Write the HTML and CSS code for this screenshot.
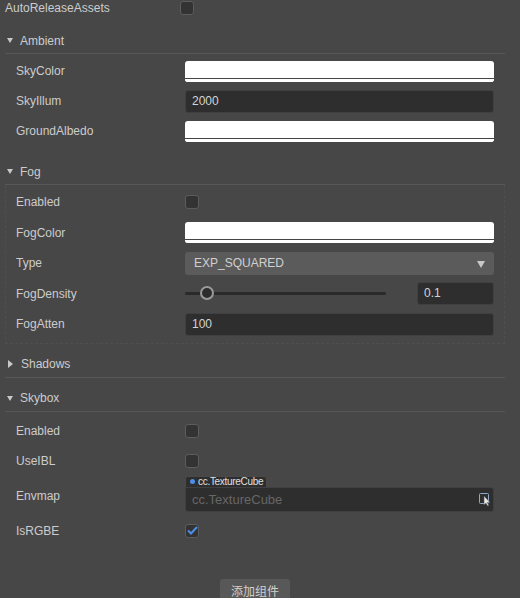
FILE: index.html
```html
<!DOCTYPE html>
<html lang="en">
  <head>
    <meta charset="UTF-8">
    <title>Scene Inspector</title>
    <link rel="stylesheet" href="styles.css">
  </head>
  <body>
    <div class="panel">
      <div class="prop top">
        <label>AutoReleaseAssets</label>
        <div class="value"><span class="checkbox"></span></div>
      </div>

      <div class="section">
        <div class="section-header"><span class="arrow down"></span>Ambient</div>
        <div class="section-body">
          <div class="prop">
            <label>SkyColor</label>
            <div class="value"><div class="color-box"><div class="color"></div><div class="alpha"></div></div></div>
          </div>
          <div class="prop">
            <label>SkyIllum</label>
            <div class="value"><div class="input">2000</div></div>
          </div>
          <div class="prop">
            <label>GroundAlbedo</label>
            <div class="value"><div class="color-box"><div class="color"></div><div class="alpha"></div></div></div>
          </div>
        </div>
      </div>

      <div class="section">
        <div class="section-header"><span class="arrow down"></span>Fog</div>
        <div class="section-body dashed">
          <div class="prop">
            <label>Enabled</label>
            <div class="value"><span class="checkbox"></span></div>
          </div>
          <div class="prop">
            <label>FogColor</label>
            <div class="value"><div class="color-box"><div class="color"></div><div class="alpha"></div></div></div>
          </div>
          <div class="prop">
            <label>Type</label>
            <div class="value">
              <div class="select">EXP_SQUARED<span class="select-arrow"></span></div>
            </div>
          </div>
          <div class="prop">
            <label>FogDensity</label>
            <div class="value slider-row">
              <div class="slider"><span class="thumb"></span></div>
              <div class="input number">0.1</div>
            </div>
          </div>
          <div class="prop">
            <label>FogAtten</label>
            <div class="value"><div class="input">100</div></div>
          </div>
        </div>
      </div>

      <div class="section">
        <div class="section-header"><span class="arrow right"></span>Shadows</div>
      </div>

      <div class="section">
        <div class="section-header"><span class="arrow down"></span>Skybox</div>
        <div class="section-body skybox">
          <div class="prop">
            <label>Enabled</label>
            <div class="value"><span class="checkbox"></span></div>
          </div>
          <div class="prop">
            <label>UseIBL</label>
            <div class="value"><span class="checkbox"></span></div>
          </div>
          <div class="prop tall">
            <label>Envmap</label>
            <div class="value">
              <div class="asset">
                <div class="asset-tag"><span class="dot"></span>cc.TextureCube</div>
                <div class="asset-field">
                  <span class="placeholder">cc.TextureCube</span>
                  <svg class="pick" width="12" height="13" viewBox="0 0 12 13">
                    <rect x="0.5" y="0.5" width="9" height="10" rx="1" fill="none" stroke="#8fa9c8" stroke-width="1"/>
                    <path d="M5 3 L5 12 L7 10 L8.5 13 L9.8 12.4 L8.4 9.6 L11 9.4 Z" fill="#e8e8e8" stroke="#555" stroke-width="0.6"/>
                  </svg>
                </div>
              </div>
            </div>
          </div>
          <div class="prop">
            <label>IsRGBE</label>
            <div class="value">
              <span class="checkbox checked">
                <svg width="11" height="9" viewBox="0 0 11 9"><path d="M1 4.5 L4 7.5 L10 1" fill="none" stroke="#4d8ee8" stroke-width="2"/></svg>
              </span>
            </div>
          </div>
        </div>
      </div>

      <div class="footer">
        <button class="add-button">添加组件</button>
      </div>
    </div>
  </body>
</html>
```

FILE: styles.css
```css
body {
  margin: 0;
  background: #474747;
  color: #cccccc;
  font-family: "Liberation Sans", Arial, sans-serif;
  font-size: 12px;
  overflow: hidden;
}

.panel {
  width: 510px;
}

.prop {
  display: flex;
  align-items: center;
  height: 30px;
  padding: 0 11px;
}

.prop label {
  width: 169px;
  flex-shrink: 0;
}

.prop .value {
  flex: 1;
  display: flex;
  align-items: center;
}

.prop.top {
  height: 25px;
  margin-top: -5px;
  padding: 0 0 0 5px;
}

.prop.top label {
  width: 175px;
}

.prop.tall {
  height: 40px;
}

.section {
  margin: 0 5px;
}

.section-header {
  display: flex;
  align-items: center;
  height: 25px;
  margin-top: 8px;
  padding-left: 2px;
  border-bottom: 1px solid #575757;
  font-size: 12px;
}

.arrow {
  width: 0;
  height: 0;
  margin-right: 7px;
}

.arrow.down {
  border-left: 3.5px solid transparent;
  border-right: 3.5px solid transparent;
  border-top: 5px solid #c8c8c8;
}

.arrow.right {
  margin-left: 1px;
  margin-right: 8px;
  border-top: 4px solid transparent;
  border-bottom: 4px solid transparent;
  border-left: 5px solid #c8c8c8;
}

.section-body {
  padding: 2px 0 5px;
}

.section-body.skybox {
  padding-top: 4px;
}

.section-body.dashed {
  padding-bottom: 3px;
  border: 1px dashed #4f4f4f;
  border-top: none;
}

.section-body.dashed .prop {
  padding-left: 10px;
  padding-right: 10px;
  height: 30.5px;
}

.checkbox {
  display: inline-flex;
  align-items: center;
  justify-content: center;
  width: 12px;
  height: 12px;
  border: 1px solid #5c5c5c;
  border-radius: 3px;
  background: #333333;
}

.color-box {
  width: 100%;
  height: 21px;
  border-radius: 3px;
  overflow: hidden;
  background: #ffffff;
  display: flex;
  flex-direction: column;
}

.color-box .color {
  height: 17px;
  border-bottom: 1px solid #444444;
}

.color-box .alpha {
  flex: 1;
  background: #ffffff;
}

.input {
  box-sizing: border-box;
  width: 100%;
  height: 23px;
  line-height: 21px;
  padding: 0 6px;
  background: #2e2e2e;
  border: 1px solid #404040;
  border-radius: 3px;
  color: #d4d4d4;
  font-size: 12px;
}

.select {
  box-sizing: border-box;
  position: relative;
  width: 100%;
  height: 23px;
  line-height: 23px;
  padding: 0 9px;
  background: #5b5b5b;
  border-radius: 3px;
  color: #d0d0d0;
  font-size: 12px;
}

.select-arrow {
  position: absolute;
  right: 9px;
  top: 9px;
  width: 0;
  height: 0;
  border-left: 4px solid transparent;
  border-right: 4px solid transparent;
  border-top: 7px solid #c8c8c8;
}

.slider-row {
  justify-content: space-between;
}

.slider {
  position: relative;
  width: 201px;
  height: 3px;
  border-radius: 2px;
  background: #2a2a2a;
}

.thumb {
  position: absolute;
  left: 15px;
  top: -6px;
  box-sizing: border-box;
  width: 14px;
  height: 14px;
  border-radius: 50%;
  background: #2d2d2d;
  border: 2px solid #9a9a9a;
}

.input.number {
  width: 77px;
}

.asset {
  width: 100%;
  display: flex;
  flex-direction: column;
  align-items: flex-start;
  margin-top: -3px;
}

.asset-tag {
  display: flex;
  align-items: center;
  height: 9px;
  padding: 0 3px 1px 4px;
  background: #2e2e2e;
  border: 1px solid #4a4a4a;
  border-bottom: none;
  border-radius: 3px 3px 0 0;
  font-size: 10px;
  color: #e0e0e0;
  letter-spacing: -0.3px;
}

.asset-tag .dot {
  width: 5px;
  height: 5px;
  margin-right: 3px;
  border-radius: 50%;
  background: #4d8ee8;
}

.asset-field {
  box-sizing: border-box;
  width: 100%;
  height: 25px;
  display: flex;
  align-items: center;
  justify-content: space-between;
  padding: 0 2px 0 6px;
  background: #2e2e2e;
  border: 1px solid #404040;
  border-radius: 0 3px 3px 3px;
}

.placeholder {
  color: #666666;
  font-size: 13px;
}

.pick {
  display: block;
}

.footer {
  display: flex;
  justify-content: center;
  padding-top: 28px;
}

.add-button {
  height: 24px;
  padding: 0 11px;
  background: #585858;
  border: none;
  border-radius: 3px;
  color: #d0d0d0;
  font-family: "Noto Sans CJK SC", "Liberation Sans", sans-serif;
  font-size: 12px;
}
```
